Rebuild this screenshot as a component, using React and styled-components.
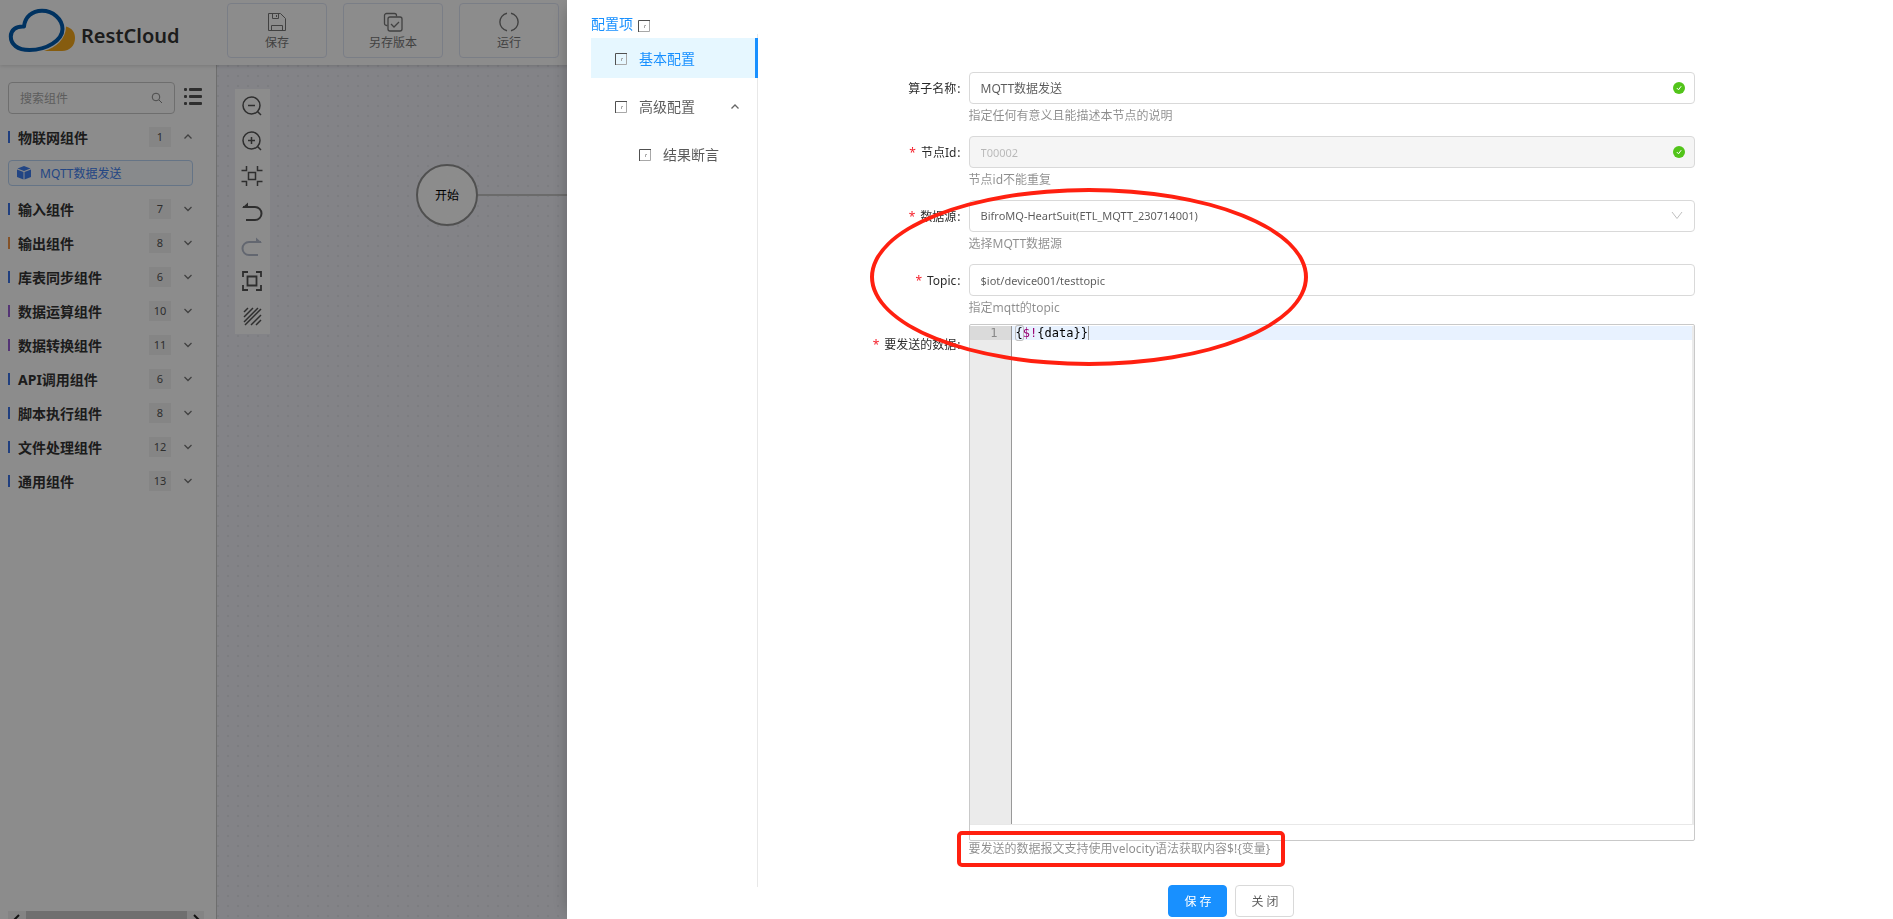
import React, { useState } from "react";
import styled, { createGlobalStyle } from "styled-components";

const GlobalStyle = createGlobalStyle`
  * { box-sizing: border-box; }
  body {
    margin: 0;
    overflow: hidden;
    font-family: "Noto Sans", "Noto Sans CJK SC", sans-serif;
    font-size: 12px;
    line-height: 20px;
    color: rgba(0, 0, 0, 0.85);
  }
  button, input, select { font: inherit; color: inherit; }
  button { cursor: pointer; }
`;

/* ---------- application shell ---------- */

const Shell = styled.div`
  display: flex;
  flex-direction: column;
  height: 100vh;
  background: #fff;
`;

const Header = styled.header`
  display: flex;
  align-items: flex-start;
  height: 65px;
  flex: none;
  z-index: 1;
  box-shadow: 0 1px 4px rgba(0, 0, 0, 0.15);
  background: #fff;
`;

const Brand = styled.div`
  display: flex;
  align-items: center;
  gap: 5px;
  width: 227px;
  height: 65px;
  padding: 0 0 4px 8px;
  svg { flex: none; }
`;

const BrandName = styled.span`
  padding-top: 10px;
  font-size: 20px;
  font-weight: 600;
  color: #333;
`;

const HeaderActions = styled.nav`
  display: flex;
  gap: 16px;
  padding-top: 3px;
`;

const ActionButton = styled.button`
  display: flex;
  flex-direction: column;
  align-items: center;
  gap: 1px;
  width: 100px;
  height: 55px;
  padding: 8px 0 0;
  border: 1px solid #dfe5f5;
  border-radius: 4px;
  background: #fff;
  color: #777;
`;

const Body = styled.div`
  display: flex;
  flex: 1;
  min-height: 0;
`;

const Sidebar = styled.aside`
  display: flex;
  flex-direction: column;
  width: 217px;
  flex: none;
  padding: 17px 12px 0 8px;
  border-right: 1px solid #c8c8c8;
`;

const SearchRow = styled.div`
  display: flex;
  align-items: center;
  gap: 8px;
  margin-bottom: 6px;
`;

const SearchBox = styled.label`
  display: flex;
  align-items: center;
  width: 167px;
  height: 32px;
  padding: 0 11px;
  border: 1px solid #c9c9c9;
  border-radius: 4px;
  input {
    flex: 1;
    min-width: 0;
    padding: 2px 0 0;
    border: 0;
    outline: 0;
    background: none;
  }
  input::placeholder { color: #aaa; }
`;

const PlainButton = styled.button`
  display: flex;
  padding: 0;
  border: 0;
  background: none;
`;

const Categories = styled.div`
  flex: 1;
  min-height: 0;
  overflow: hidden;
`;

const CategoryButton = styled.button`
  display: flex;
  align-items: center;
  width: 100%;
  height: 34px;
  padding: 0 11px 0 0;
  border: 0;
  background: none;
  color: #333;
  font-size: 14px;
  font-weight: 700;
  &::before {
    content: "";
    width: 2px;
    height: 12px;
    margin-right: 8px;
    background: ${(p) => p.$accent};
  }
  svg { margin-left: 12px; }
`;

const ItemText = styled.span`
  padding-top: 2px;
`;

const CountBadge = styled.span`
  width: 22px;
  margin-left: auto;
  background: #f2f2f2;
  font-size: 11px;
  font-weight: 400;
  color: #555;
  text-align: center;
`;

const ComponentItem = styled.button`
  display: flex;
  align-items: center;
  gap: 9px;
  width: 185px;
  height: 26px;
  margin: 6px 0;
  padding: 0 8px;
  border: 1px solid #b9d3f5;
  border-radius: 4px;
  background: #f8fbff;
  color: #4080f0;
`;

const ScrollTrack = styled.div`
  display: flex;
  justify-content: space-between;
  width: 196px;
  height: 8px;
  flex: none;
  overflow: hidden;
  background: #f0f0f0;
`;

const ScrollThumb = styled.div`
  width: 161px;
  background: #cacaca;
`;

const Canvas = styled.main`
  position: relative;
  flex: 1;
  background-color: #eeeff6;
  background-image: radial-gradient(circle at 1px 1px, #e2e3ea 1px, transparent 1px);
  background-size: 10px 10px;
`;

const ToolPalette = styled.div`
  position: absolute;
  left: 18px;
  top: 24px;
  display: flex;
  flex-direction: column;
  background: #fff;
`;

const ToolButton = styled.button`
  display: flex;
  align-items: center;
  justify-content: center;
  width: 35px;
  height: 35px;
  padding: 0 1px 2px 0;
  border: 0;
  background: none;
  color: ${(p) => (p.$muted ? "#b4bccd" : "#555")};
`;

const StartNode = styled.div`
  position: absolute;
  left: 199px;
  top: 99px;
  display: flex;
  align-items: center;
  justify-content: center;
  width: 62px;
  height: 62px;
  padding-top: 2px;
  border: 2px solid #939393;
  border-radius: 50%;
  background: #fff;
  color: #000;
`;

const FlowLine = styled.div`
  position: absolute;
  left: 261px;
  right: 0;
  top: 129px;
  height: 2px;
  background: #c4c4c4;
`;

/* ---------- drawer ---------- */

const Mask = styled.div`
  position: fixed;
  inset: 0;
  z-index: 5;
  background: rgba(0, 0, 0, 0.45);
`;

const Drawer = styled.section`
  position: fixed;
  top: 0;
  right: 0;
  bottom: 0;
  z-index: 6;
  display: flex;
  flex-direction: column;
  width: calc(70% + 1px);
  padding: 14px 16px 0 24px;
  background: #fff;
  box-shadow: -6px 0 16px -8px rgba(0, 0, 0, 0.3);
`;

const DrawerTitle = styled.h2`
  display: flex;
  align-items: flex-end;
  gap: 5px;
  height: 20px;
  margin: 0;
  font-size: 14px;
  font-weight: 400;
  color: #1890ff;
  svg { margin-bottom: 2px; }
`;

const DrawerBody = styled.div`
  display: flex;
  flex: 1;
  align-items: flex-start;
`;

const Menu = styled.nav`
  display: flex;
  flex-direction: column;
  gap: 8px;
  width: 167px;
  height: calc(100vh - 66px);
  flex: none;
  padding-top: 4px;
  border-right: 1px solid #e8e8e8;
`;

const MenuItem = styled.button`
  display: flex;
  align-items: center;
  gap: 12px;
  width: 167px;
  height: 40px;
  flex: none;
  padding: 2px 15px 0 ${(p) => (p.$level === 2 ? 48 : 24)}px;
  border: 0;
  border-right: 3px solid ${(p) => (p.$active ? "#1890ff" : "transparent")};
  background: ${(p) => (p.$active ? "#e6f7ff" : "none")};
  color: ${(p) => (p.$active ? "#1890ff" : "rgba(0, 0, 0, 0.65)")};
  font-size: 14px;
  svg:last-child:not(:first-child) { margin-left: auto; }
`;

const Form = styled.form`
  flex: 1;
  min-width: 0;
  margin-left: 29px;
  padding-top: 38px;
`;

const FormRow = styled.div`
  display: grid;
  grid-template-columns: 1fr 4fr 1fr;
`;

const FieldLabel = styled.label`
  justify-self: end;
  height: 32px;
  margin: ${(p) => (p.$shifted ? 4 : 0)}px 8px 0 0;
  line-height: 34px;
  white-space: nowrap;
  &::after {
    content: ":";
    margin-left: 1px;
  }
`;

const Required = styled.span`
  margin-right: 5px;
  color: #f5222d;
`;

const Field = styled.div`
  position: relative;
  min-width: 0;
`;

const Control = styled.div`
  display: flex;
  align-items: center;
  height: 32px;
  padding-right: 9px;
  border: 1px solid #d9d9d9;
  border-radius: 4px;
  background: ${(p) => (p.$disabled ? "#f5f5f5" : "#fff")};
  color: ${(p) => (p.$disabled ? "rgba(0, 0, 0, 0.25)" : "rgba(0, 0, 0, 0.65)")};
  font-size: ${(p) => (p.$latin ? 11 : 12)}px;
  input, select {
    flex: 1;
    min-width: 0;
    height: 30px;
    padding: 0 11px;
    border: 0;
    outline: 0;
    background: none;
    appearance: none;
    opacity: 1;
  }
  svg { flex: none; }
`;

const Help = styled.div`
  height: 16px;
  margin: 4px 0 12px;
  line-height: 16px;
  color: rgba(0, 0, 0, 0.45);
`;

const TopicHelp = styled(Help)`
  margin-bottom: 8px;
`;

const EditorHelp = styled(Help)`
  position: relative;
  margin: 0;
`;

const Editor = styled.div`
  display: flex;
  height: 517px;
  padding: 1px 2px 15px 0;
  border: 1px solid #c9c9c9;
  border-radius: 2px;
  font-family: "DejaVu Sans Mono", monospace;
  line-height: 14px;
`;

const EditorPane = styled.div`
  display: flex;
  flex: 1;
  border-bottom: 1px solid #e8e8e8;
  box-shadow: 2px 0 0 #ebebeb;
`;

const Gutter = styled.div`
  width: 42px;
  border-right: 1px solid #999;
  background: #ebebeb;
  color: #888;
  text-align: right;
`;

const GutterLine = styled.div`
  height: 14px;
  padding-right: 13px;
  background: #dadada;
`;

const Code = styled.div`
  flex: 1;
  outline: 0;
  color: #000;
`;

const CodeLine = styled.div`
  height: 14px;
  padding-left: 4px;
  background: #e8f2ff;
  white-space: pre;
`;

const Bracket = styled.span`
  border-radius: 2px;
  box-shadow: 0 0 0 1px #c0c0c0;
`;

const Variable = styled.span`
  color: #990073;
`;

const Caret = styled.span`
  border-right: 1px solid #999;
`;

const Footer = styled.div`
  display: flex;
  gap: 8px;
  margin-top: 28px;
  padding-left: 35%;
`;

const FooterButton = styled.button`
  width: 59px;
  height: 32px;
  padding: 1px 0 0;
  border: 1px solid ${(p) => (p.$primary ? "#1890ff" : "#d9d9d9")};
  border-radius: 4px;
  background: ${(p) => (p.$primary ? "#1890ff" : "#fff")};
  color: ${(p) => (p.$primary ? "#fff" : "rgba(0, 0, 0, 0.65)")};
  white-space: pre;
`;

const EllipseMark = styled.div`
  position: absolute;
  left: -99px;
  top: -76px;
  z-index: 2;
  width: 438px;
  height: 178px;
  border: 4px solid #ff2010;
  border-radius: 50%;
  pointer-events: none;
`;

const BoxMark = styled.div`
  position: absolute;
  left: -12px;
  top: -10px;
  width: 328px;
  height: 36px;
  border: 4px solid #ff2010;
  border-radius: 5px;
  pointer-events: none;
`;

/* ---------- drawings ---------- */

const Icon = ({ size = 20, w = 1, children }) => (
  <svg width={size} height={size} viewBox={`0 0 ${size} ${size}`} fill="none" stroke="currentColor" strokeWidth={w} aria-hidden="true">
    {children}
  </svg>
);

const Logo = () => (
  <svg width="68" height="46" viewBox="8 8 68 46" aria-hidden="true">
    <path d="M66 26.500C72 28 75 32.500 75 38C75 45.500 70 51 62 51H44C56 47.500 66 39 66 26.500Z" fill="#f5a81c" />
    <path d="M24 26.500C25 17 32 10.800 42 10.800C53 10.800 62.500 19 62.500 29C62.500 40 47 50 29.500 50C17 50 10.800 44 10.800 36.500C10.800 30 16 26 24 26.500Z" fill="#fff" stroke="#005bb0" strokeWidth="4" strokeLinejoin="round" />
  </svg>
);

const SaveIcon = () => (
  <Icon>
    <path d="M1.500 1.500h12l5 5v12h-17zM5.500 1.500v5h6v-5M4.500 18.500v-5h11v5M9.500 3v2" />
  </Icon>
);

const CopyIcon = () => (
  <Icon w={1.3}>
    <path d="M4.500 13.500h-1a2 2 0 0 1-2-2v-8a2 2 0 0 1 2-2h8a2 2 0 0 1 2 2v1" />
    <rect x="5" y="5" width="14" height="14" rx="2" />
    <path d="M8 12l3 3 5-5" />
  </Icon>
);

const RunIcon = () => (
  <Icon w={1.4}>
    <path d="M8 1.200A9 9 0 0 0 8 18.800M12 1.200A9 9 0 0 1 12 18.800" />
  </Icon>
);

const SearchIcon = () => (
  <Icon size={12}>
    <circle cx="5" cy="5" r="3.800" stroke="#888" />
    <path d="M8 8l3 3" stroke="#888" />
  </Icon>
);

const ListIcon = () => (
  <svg width="20" height="20" viewBox="0 0 20 20" fill="#555" aria-hidden="true">
    {[0, 7, 14].map((y) => (
      <g key={y}>
        <rect x="1" y={y} width="3" height="3" rx="1" />
        <rect x="6" y={y} width="13" height="3" rx="1" />
      </g>
    ))}
  </svg>
);

const CubeIcon = () => (
  <svg width="14" height="14" viewBox="1 1 14 14" fill="#3f7ff0" aria-hidden="true">
    <path d="M8 1l6.500 2.500L8 6L1.500 3.500zM1 4.500L7.500 7v7.500L1 12zM15 4.500L8.500 7v7.500L15 12z" />
  </svg>
);

const Chevron = ({ up, color = "#777" }) => (
  <svg width="10" height="10" viewBox="0 0 10 10" fill="none" stroke={color} strokeWidth="1.300" aria-hidden="true">
    <path d={up ? "M1.500 6.500L5 3l3.500 3.500" : "M1.500 3L5 6.500L8.500 3"} />
  </svg>
);

const SelectArrow = () => (
  <svg width="14" height="14" viewBox="0 0 14 14" fill="none" stroke="#bfbfbf" aria-hidden="true">
    <path d="M1 3l5 6.500L11 3" />
  </svg>
);

const GlyphBox = () => (
  <svg width="12" height="12" viewBox="0 0 12 12" fill="none" aria-hidden="true">
    <path d="M11.500 0v11.500H0" stroke="#a8a8a8" />
    <path d="M0.500 12V0.500H12" stroke="#505050" />
    <path d="M6.500 8V5.500H8" stroke="#a8a8a8" />
  </svg>
);

const OkIcon = () => (
  <svg width="12" height="12" viewBox="0 0 12 12" aria-hidden="true">
    <circle cx="6" cy="6" r="6" fill="#52c41a" />
    <path d="M3.800 6l1.700 1.800L8.200 4.200" fill="none" stroke="#fff" />
  </svg>
);

const toolIcons = [
  ["缩小", <><circle cx="10.500" cy="10.500" r="8.500" /><path d="M7 10.500h7M16.500 16.500l3.500 3.500" /></>],
  ["放大", <><circle cx="10.500" cy="10.500" r="8.500" /><path d="M7 10.500h7M10.500 7v7M16.500 16.500l3.500 3.500" /></>],
  ["适应", <path d="M7.500 7.500h7v7h-7zM5.500 1v4.500H.5M16.500 1v4.500h5M5.500 21v-4.500H.5M16.500 21v-4.500h5" />],
  ["撤销", <><path d="M2 7h12a6.500 6.500 0 0 1 0 13H5" strokeWidth="2" /><path d="M1 8L7 2.500V8z" fill="currentColor" stroke="none" /></>],
  ["重做", <><path d="M20 7H8a6.500 6.500 0 0 0 0 13h9" strokeWidth="2" /><path d="M21 8L15 2.500V8z" fill="currentColor" stroke="none" /></>],
  ["全屏", <path d="M6.500 6.500h9v9h-9zM2 7V2h5M15 2h5v5M2 15v5h5M15 20h5v-5" strokeWidth="1.800" />],
  ["网格", <path d="M3 7l4-4M3 12l9-9M3 17L17 3M4 20L20 4M10 20L20 10M15 20l5-5" />],
];

const categories = [
  ["输入组件", 7, "#3b74e8"],
  ["输出组件", 8, "#f0954a"],
  ["库表同步组件", 6, "#3b74e8"],
  ["数据运算组件", 10, "#9a5fd6"],
  ["数据转换组件", 11, "#9a5fd6"],
  ["API调用组件", 6, "#3b74e8"],
  ["脚本执行组件", 8, "#3b74e8"],
  ["文件处理组件", 12, "#3b74e8"],
  ["通用组件", 13, "#3b74e8"],
];

const Category = ({ name, count, accent, open }) => (
  <CategoryButton type="button" $accent={accent} aria-expanded={!!open}>
    <ItemText>{name}</ItemText>
    <CountBadge>{count}</CountBadge>
    <Chevron up={open} />
  </CategoryButton>
);

const Label = ({ htmlFor, id, required, shifted, children }) => (
  <FieldLabel htmlFor={htmlFor} id={id} $shifted={shifted}>
    {required && <Required>*</Required>}
    {children}
  </FieldLabel>
);

export default function App() {
  const [name, setName] = useState("MQTT数据发送");
  const [topic, setTopic] = useState("$iot/device001/testtopic");

  return (
    <>
      <GlobalStyle />
      <Shell>
        <Header>
          <Brand><Logo /><BrandName>RestCloud</BrandName></Brand>
          <HeaderActions>
            <ActionButton type="button"><SaveIcon />保存</ActionButton>
            <ActionButton type="button"><CopyIcon />另存版本</ActionButton>
            <ActionButton type="button"><RunIcon />运行</ActionButton>
          </HeaderActions>
        </Header>
        <Body>
          <Sidebar>
            <SearchRow>
              <SearchBox>
                <input type="text" placeholder="搜索组件" aria-label="搜索组件" />
                <SearchIcon />
              </SearchBox>
              <PlainButton type="button" aria-label="列表"><ListIcon /></PlainButton>
            </SearchRow>
            <Categories>
              <Category name="物联网组件" count={1} accent="#3b74e8" open />
              <ComponentItem type="button"><CubeIcon /><ItemText>MQTT数据发送</ItemText></ComponentItem>
              {categories.map(([label, count, accent]) => (
                <Category key={label} name={label} count={count} accent={accent} />
              ))}
            </Categories>
            <ScrollTrack>
              <Icon size={17} w={2}><path d="M11 4L6 9" /></Icon>
              <ScrollThumb />
              <Icon size={17} w={2}><path d="M7 4l5 5" /></Icon>
            </ScrollTrack>
          </Sidebar>
          <Canvas>
            <ToolPalette>
              {toolIcons.map(([label, drawing]) => (
                <ToolButton key={label} type="button" aria-label={label} $muted={label === "重做"}>
                  <Icon size={22} w={1.5}>{drawing}</Icon>
                </ToolButton>
              ))}
            </ToolPalette>
            <FlowLine />
            <StartNode>开始</StartNode>
          </Canvas>
        </Body>
      </Shell>

      <Mask />
      <Drawer role="dialog" aria-label="配置项">
        <DrawerTitle>配置项<GlyphBox /></DrawerTitle>
        <DrawerBody>
          <Menu>
            <MenuItem type="button" $active><GlyphBox />基本配置</MenuItem>
            <MenuItem type="button"><GlyphBox />高级配置<Chevron up color="#666" /></MenuItem>
            <MenuItem type="button" $level={2}><GlyphBox />结果断言</MenuItem>
          </Menu>
          <Form onSubmit={(e) => e.preventDefault()}>
            <FormRow>
              <Label htmlFor="name">算子名称</Label>
              <Field>
                <Control>
                  <input id="name" type="text" value={name} onChange={(e) => setName(e.target.value)} />
                  <OkIcon />
                </Control>
                <Help>指定任何有意义且能描述本节点的说明</Help>
              </Field>
            </FormRow>
            <FormRow>
              <Label htmlFor="node" required>节点Id</Label>
              <Field>
                <Control $disabled $latin>
                  <input id="node" type="text" value="T00002" disabled readOnly />
                  <OkIcon />
                </Control>
                <Help>节点id不能重复</Help>
              </Field>
            </FormRow>
            <FormRow>
              <Label htmlFor="source" required>数据源</Label>
              <Field>
                <Control $latin>
                  <select id="source" defaultValue="mqtt">
                    <option value="mqtt">BifroMQ-HeartSuit(ETL_MQTT_230714001)</option>
                  </select>
                  <SelectArrow />
                </Control>
                <Help>选择MQTT数据源</Help>
              </Field>
            </FormRow>
            <FormRow>
              <Label htmlFor="topic" required>Topic</Label>
              <Field>
                <Control $latin>
                  <input id="topic" type="text" value={topic} onChange={(e) => setTopic(e.target.value)} />
                </Control>
                <TopicHelp>指定mqtt的topic</TopicHelp>
                <EllipseMark />
              </Field>
            </FormRow>
            <FormRow>
              <Label id="payload-label" required shifted>要发送的数据</Label>
              <Field>
                <Editor>
                  <EditorPane>
                    <Gutter><GutterLine>1</GutterLine></Gutter>
                    <Code role="textbox" aria-multiline="true" aria-labelledby="payload-label" contentEditable suppressContentEditableWarning spellCheck={false}>
                      <CodeLine><Bracket>{"{"}</Bracket><Variable>$!</Variable>{"{data}"}<Caret>{"}"}</Caret></CodeLine>
                    </Code>
                  </EditorPane>
                </Editor>
                <EditorHelp>
                  要发送的数据报文支持使用velocity语法获取内容$!{"{变量}"}
                  <BoxMark />
                </EditorHelp>
              </Field>
            </FormRow>
            <Footer>
              <FooterButton type="submit" $primary>保 存</FooterButton>
              <FooterButton type="button">关 闭</FooterButton>
            </Footer>
          </Form>
        </DrawerBody>
      </Drawer>
    </>
  );
}
